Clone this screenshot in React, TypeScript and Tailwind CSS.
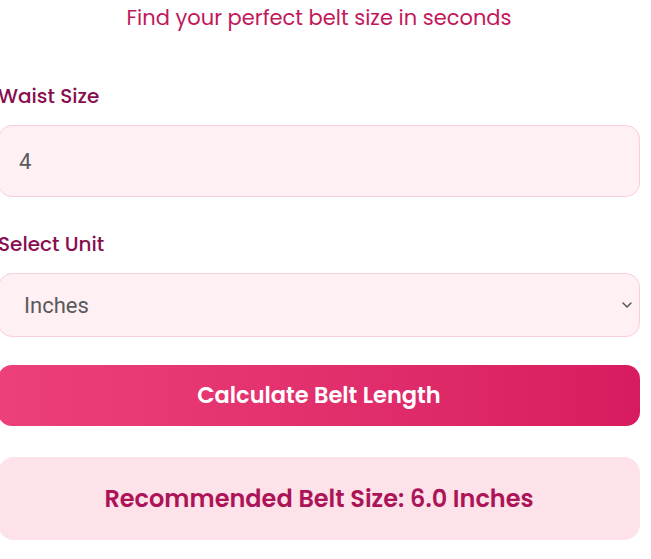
import { ChevronDown } from "lucide-react";

const heading = "font-['Poppins','Inter',sans-serif]";

export default function App() {
  return (
    <div className="min-h-screen bg-white">
      <div className="ml-[-2px] w-[642px]">
        {/* Tagline */}
        <p className={`${heading} pt-[4px] text-center text-[21px] leading-[28px] text-[#c2185b]`}>
          Find your perfect belt size in seconds
        </p>

        {/* Waist size */}
        <label className={`${heading} mt-[49px] block text-[20px] font-medium leading-[30px] text-[#880e4f]`}>
          Waist Size
        </label>
        <div className="mt-[14px] flex h-[72px] items-center rounded-[14px] border border-[#f8cfdc] bg-[#fff0f4] px-[20px]">
          <span className="font-['Roboto',sans-serif] text-[22px] text-[#5a5a5a]">4</span>
        </div>

        {/* Unit */}
        <label className={`${heading} mt-[32px] block text-[20px] font-medium leading-[30px] text-[#880e4f]`}>
          Select Unit
        </label>
        <div className="mt-[14px] flex h-[64px] items-center justify-between rounded-[14px] border border-[#f8cfdc] bg-[#fff0f4] pl-[25px] pr-[4px]">
          <span className="font-['Roboto',sans-serif] text-[22px] text-[#5a5a5a]">Inches</span>
          <ChevronDown className="h-[16px] w-[16px] text-[#555]" strokeWidth={2.25} />
        </div>

        {/* Button */}
        <button
          className={`${heading} mt-[28px] flex h-[61px] w-full items-center justify-center rounded-[14px] bg-gradient-to-r from-[#ec407a] to-[#d81b60] text-[22.5px] font-semibold text-white`}
        >
          Calculate Belt Length
        </button>

        {/* Result */}
        <div className="mt-[31px] flex h-[83px] items-center justify-center rounded-[16px] bg-[#fde2ea]">
          <p className={`${heading} text-[24px] font-semibold text-[#ad1457]`}>
            Recommended Belt Size: 6.0 Inches
          </p>
        </div>
      </div>
    </div>
  );
}
